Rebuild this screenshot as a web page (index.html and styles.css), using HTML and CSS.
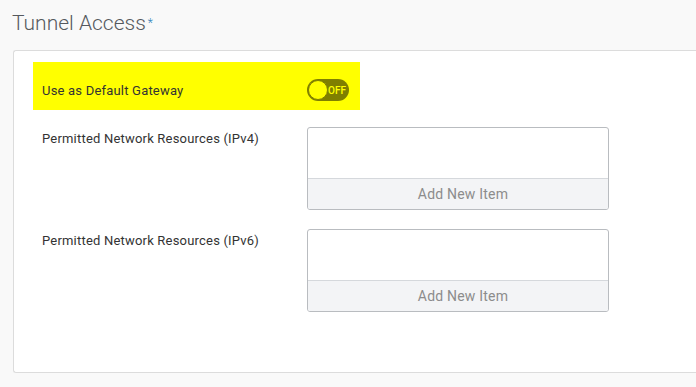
FILE: index.html
```html
<!DOCTYPE html>
<html>
<head>
<meta charset="utf-8">
<link rel="stylesheet" href="styles.css">
</head>
<body>
<div class="page">
  <h2 class="title">Tunnel Access<span class="req">*</span></h2>
  <div class="card">
    <div class="row highlight">
      <span class="label">Use as Default Gateway</span>
      <span class="toggle"><span class="knob"></span><span class="state">OFF</span></span>
    </div>
    <div class="row field">
      <span class="label">Permitted Network Resources (IPv4)</span>
      <div class="list">
        <div class="list-body"></div>
        <div class="list-add">Add New Item</div>
      </div>
    </div>
    <div class="row field">
      <span class="label">Permitted Network Resources (IPv6)</span>
      <div class="list">
        <div class="list-body"></div>
        <div class="list-add">Add New Item</div>
      </div>
    </div>
  </div>
</div>
</body>
</html>
```
FILE: styles.css
```css
html, body {
  margin: 0;
  padding: 0;
  background: #f9f9f9;
  font-family: Roboto, "Liberation Sans", sans-serif;
  overflow: hidden;
}
.page {
  padding: 10px 0 0 13px;
}
.title {
  margin: 0 0 14px -1px;
  font-size: 21px;
  font-weight: 300;
  color: #55595e;
  line-height: 26px;
  display: flex;
  align-items: center;
}
.req {
  color: #2a7fb8;
  font-size: 12px;
  margin-left: 2px;
}
.card {
  background: #fff;
  border: 1px solid #dcdcdc;
  border-right: none;
  border-radius: 3px 0 0 3px;
  height: 323px;
  padding: 11px 0 0 19px;
  box-sizing: border-box;
}
.row {
  display: flex;
  font-size: 13px;
  letter-spacing: 0.2px;
  color: #333;
}
.highlight {
  background: #ffff00;
  width: 327px;
  height: 48px;
  align-items: center;
  padding: 17px 0 9px 9px;
  box-sizing: border-box;
}
.highlight .label {
  width: 265px;
  padding-top: 1px;
}
.toggle {
  width: 42px;
  height: 22px;
  border-radius: 11px;
  background: #7f7f00;
  position: relative;
  display: flex;
  align-items: center;
  justify-content: flex-end;
  padding-right: 3px;
  box-sizing: border-box;
}
.knob {
  position: absolute;
  left: 1px;
  top: 1px;
  width: 20px;
  height: 20px;
  box-sizing: border-box;
  border-radius: 50%;
  background: #ffff00;
  border: 1.5px solid #7f7f00;
}
.state {
  color: #ffff00;
  font-size: 10px;
  font-weight: 500;
  letter-spacing: 0;
}
.field {
  padding-left: 9px;
  margin-top: 17px;
}
.field + .field {
  margin-top: 19px;
}
.field .label {
  width: 265px;
  padding-top: 4px;
}
.list {
  width: 302px;
  height: 83px;
  border: 1px solid #b9bcc0;
  border-radius: 3px;
  box-sizing: border-box;
  display: flex;
  flex-direction: column;
  overflow: hidden;
}
.list-body {
  height: 50px;
  border-bottom: 1px solid #d5d8dc;
}
.list-add {
  flex: 1;
  background: #f3f4f6;
  color: #8c8c8c;
  font-size: 14px;
  letter-spacing: 0.2px;
  padding-left: 10px;
  display: flex;
  align-items: center;
  justify-content: center;
}
```
